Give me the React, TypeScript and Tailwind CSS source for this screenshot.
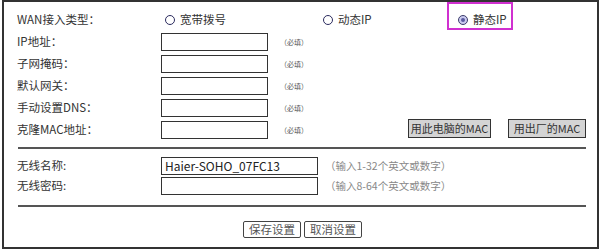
import type { ReactNode } from 'react';

const FONT = { fontFamily: '"Noto Sans CJK SC", "Noto Sans", sans-serif' };

const LABEL = 'w-[144px] shrink-0 text-[11.5px] text-[#333]';
const INPUT = 'h-[18px] shrink-0 border border-[#333] bg-white';

function Radio({ checked, label }: { checked?: boolean; label: string }) {
  return (
    <span className="flex items-center gap-[5px] text-[11.5px] text-[#333]">
      {checked ? (
        <span className="flex h-[10px] w-[10px] items-center justify-center rounded-full border border-[#3d3d6b] bg-[#c9c9ee]">
          <span className="h-[4px] w-[4px] rounded-full bg-[#5a5aa0]" />
        </span>
      ) : (
        <span className="h-[10px] w-[10px] rounded-full border-[1.5px] border-[#2b2b5e] bg-white" />
      )}
      {label}
    </span>
  );
}

function FieldRow({ label, children }: { label: string; children?: ReactNode }) {
  return (
    <div className="flex h-[22px] items-center">
      <span className={LABEL}>{label}</span>
      <span className={`${INPUT} w-[107px]`} />
      <span className="ml-[12px] text-[7px] text-[#555]">（必填）</span>
      {children}
    </div>
  );
}

function MacButton({ label, width }: { label: string; width: string }) {
  return (
    <button
      className={`h-[19px] ${width} whitespace-nowrap border border-[#333] bg-[#d4d4d4] px-0 text-[11px] leading-none text-[#333]`}
      type="button"
    >
      {label}
    </button>
  );
}

function ActionButton({ label }: { label: string }) {
  return (
    <button
      className="h-[17px] w-[58px] rounded-[2px] border border-[#444] bg-white text-[11.5px] leading-none text-[#555]"
      type="button"
    >
      {label}
    </button>
  );
}

export default function App() {
  return (
    <div className="h-[250px] w-[600px] bg-white" style={FONT}>
      <div className="ml-[2px] flex h-[249px] w-[597px] flex-col border-2 border-[#333] pl-[13px] pr-[11px] pt-[6px]">
        <div className="flex h-[23px] items-center">
          <span className={LABEL}>WAN接入类型：</span>
          <div className="ml-[4px] w-[158px]">
            <Radio label="宽带拨号" />
          </div>
          <div className="w-[135px]">
            <Radio label="动态IP" />
          </div>
          <div className="relative">
            <Radio checked label="静态IP" />
            <span className="absolute left-[-11px] top-[-9px] h-[28px] w-[66px] border-2 border-[#d030d0]" />
          </div>
        </div>

        <FieldRow label="IP地址：" />
        <FieldRow label="子网掩码：" />
        <FieldRow label="默认网关：" />
        <FieldRow label="手动设置DNS：" />
        <FieldRow label="克隆MAC地址：">
          <div className="mb-[3px] ml-auto flex gap-[17px]">
            <MacButton label="用此电脑的MAC" width="w-[83px]" />
            <MacButton label="用出厂的MAC" width="w-[78px]" />
          </div>
        </FieldRow>

        <div className="ml-[1px] mt-[6px] h-[2px] bg-[#555]" />

        <div className="mt-[7px] flex h-[20px] items-center">
          <span className={LABEL}>无线名称:</span>
          <span className={`${INPUT} flex w-[157px] items-center bg-[#e8e8e8] pl-[3px] text-[12px] text-[#222]`}>
            Haier-SOHO_07FC13
          </span>
          <span className="ml-[7px] text-[10.5px] text-[#888]">（输入1-32个英文或数字）</span>
        </div>
        <div className="flex h-[20px] items-center">
          <span className={LABEL}>无线密码:</span>
          <span className={`${INPUT} w-[157px]`} />
          <span className="ml-[7px] text-[10.5px] text-[#888]">（输入8-64个英文或数字）</span>
        </div>

        <div className="ml-[1px] mt-[9px] h-[2px] bg-[#555]" />

        <div className="ml-[226px] mt-[14px] flex gap-[3px]">
          <ActionButton label="保存设置" />
          <ActionButton label="取消设置" />
        </div>
      </div>
    </div>
  );
}
